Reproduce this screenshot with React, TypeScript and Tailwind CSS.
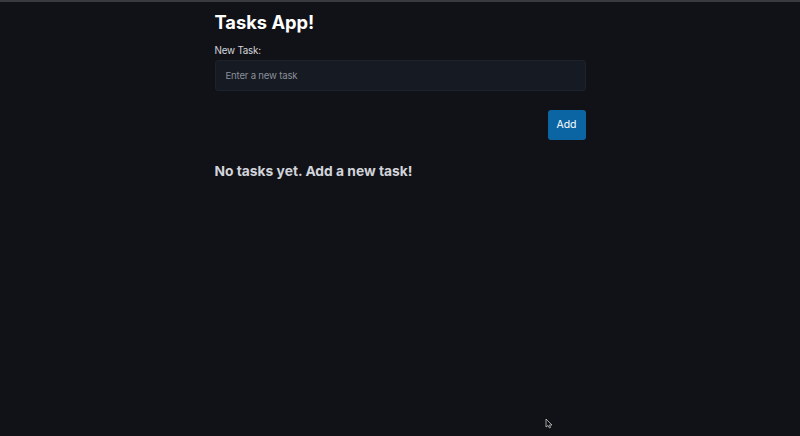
import React, { useState } from 'react';

const App: React.FC = () => {
  const [task, setTask] = useState('');

  return (
    <div
      className="relative min-h-[436px] w-full bg-[#111217] border-t-2 border-[#393a40]"
      style={{ fontFamily: 'Inter, "Noto Sans", sans-serif' }}
    >
      <div className="mx-auto w-[371px] pt-[8px]">
        <h1 className="text-[18.3px] leading-[24px] font-bold text-white">Tasks App!</h1>

        {/* Task input */}
        <label className="mt-[10px] block text-[9.8px] leading-[14px] tracking-[-0.2px] text-[#d4d6db]">New Task:</label>
        <input
          type="text"
          value={task}
          onChange={(e) => setTask(e.target.value)}
          placeholder="Enter a new task"
          className="mt-[2px] block h-[31px] w-full rounded-[3px] border border-[#1e222b] bg-[#161a22] px-[10px] text-[9.6px] tracking-[-0.2px] text-white placeholder:text-[#8a8f99] focus:outline-none"
        />
        <div className="mt-[19px] flex justify-end">
          <button className="h-[30px] w-[38px] rounded-[3px] bg-[#0b65a3] text-[10.5px] text-white">Add</button>
        </div>

        <h2 className="mt-[21px] text-[13.8px] leading-[20px] font-bold text-[#d1d4da]">No tasks yet. Add a new task!</h2>
      </div>

      {/* mouse pointer */}
      <svg className="absolute left-[545px] top-[416px]" width="8" height="11" viewBox="0 0 8 11">
        <path d="M1 1 L1 9 L3 7.5 L4.5 10 L5.5 9.5 L4.5 7 L7 7 Z" fill="#111217" stroke="#c8c8c8" strokeWidth="0.8" />
      </svg>
    </div>
  );
};

export default App;
